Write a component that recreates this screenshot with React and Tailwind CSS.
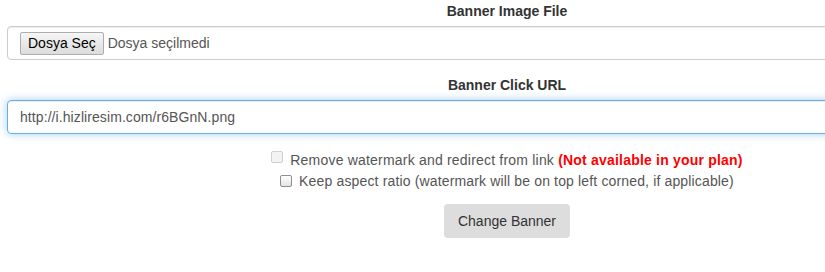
export default function App() {
  return (
    <div className="w-[825px] h-[272px] overflow-hidden bg-white font-['Liberation_Sans',Arial,sans-serif] text-[14px] leading-[20px] text-[#333]">
      <div className="ml-[7px] w-[1000px] pt-[1px] text-center">
        <div className="mb-[15px]">
          <label className="inline-block mb-[5px] font-bold">Banner Image File</label>
          <div className="h-[34px] border border-[#ccc] rounded-[4px] shadow-[inset_0_1px_1px_rgba(0,0,0,0.075)] flex items-center pl-[12px] text-left">
            <span className="h-[23px] px-[7px] flex items-center border border-[#adadad] rounded-[2px] bg-[linear-gradient(#f6f6f6,#dcdcdc)] text-black">Dosya Seç</span>
            <span className="ml-[4px] text-[#555]">Dosya seçilmedi</span>
          </div>
        </div>
        <div className="mb-[16px]">
          <label className="inline-block mb-[5px] font-bold">Banner Click URL</label>
          <div className="h-[34px] border border-[#66afe9] rounded-[4px] shadow-[inset_0_1px_1px_rgba(0,0,0,0.075),0_0_8px_rgba(102,175,233,0.6)] flex items-center px-[12px] text-left text-[#555] tracking-[0.08px]">
            http://i.hizliresim.com/r6BGnN.png
          </div>
        </div>
        <div className="flex justify-center items-start h-[20px] tracking-[0.2px]">
          <span className="mt-[1px] mr-[7px] w-[12px] h-[12px] rounded-[2px] border border-[#cfcfcf] bg-[#f3f3f3]"></span>
          <span className="text-[#555]">Remove watermark and redirect from link <b className="text-[#ff0000]">(Not available in your plan)</b></span>
        </div>
        <div className="mt-[1px] flex justify-center items-start h-[20px] tracking-[0.15px]">
          <span className="mt-[4px] mr-[7px] w-[12px] h-[12px] rounded-[2px] border border-[#8e8e8e] bg-[linear-gradient(#ffffff,#e3e3e3)]"></span>
          <span className="text-[#555]">Keep aspect ratio (watermark will be on top left corned, if applicable)</span>
        </div>
        <div className="mt-[13px] flex justify-center">
          <span className="h-[34px] px-[14px] flex items-center rounded-[4px] bg-[#dddddd] text-[#333]">Change Banner</span>
        </div>
      </div>
    </div>
  );
}
